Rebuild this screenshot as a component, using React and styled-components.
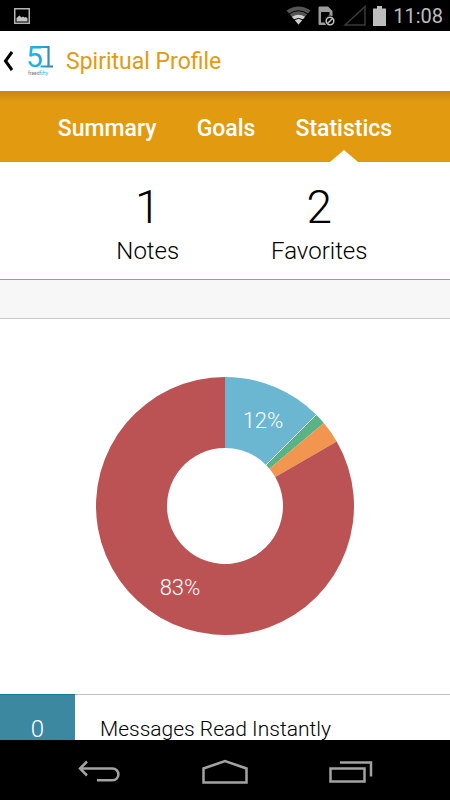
import React from 'react'
import styled, { createGlobalStyle } from 'styled-components'

const slices = [
    { name: 'blue', from: 0, to: 45, color: '#6bb6d0', label: '12%', x: 167, y: 51 },
    { name: 'green', from: 45, to: 50, color: '#59b385' },
    { name: 'orange', from: 50, to: 60, color: '#f2954f' },
    { name: 'red', from: 60, to: 360, color: '#bb5354', label: '83%', x: 84, y: 218 },
]

const center = 129
const outer = 129
const inner = 58

const point = (radius, angle) => {
    const rad = (angle * Math.PI) / 180
    return `${center + radius * Math.sin(rad)} ${center - radius * Math.cos(rad)}`
}

const slicePath = ({ from, to }) => {
    const large = to - from > 180 ? 1 : 0
    return `M${point(outer, from)} A${outer} ${outer} 0 ${large} 1 ${point(outer, to)} L${point(inner, to)} A${inner} ${inner} 0 ${large} 0 ${point(inner, from)} Z`
}

function StatusBar() {
    return (
        <StatusBarStyled>
            <svg width="16" height="16" viewBox="0 0 16 16">
                <rect x="0.75" y="0.75" width="14.5" height="14.5" fill="none" stroke="#b5b5b5" strokeWidth="1.5" />
                <path d="M2.5 13.5V10l3-2.5 2 2L9 8.500l1.500 1L12 9l1.500 1.500v3z" fill="#c4c4c4" />
            </svg>
            <div className="status-icons">
                <svg width="25" height="19" viewBox="0 0 25 19">
                    <path d="M12.500 18.500 0.500 4.500Q12.500-3.500 24.500 4.500z" fill="#555" />
                    <path d="M3 8Q12.500 1.500 22 8" fill="none" stroke="#000" strokeWidth="1" />
                    <path d="M12.500 18.500 6 10.800Q12.500 6.500 19 10.800z" fill="#d0d0d0" />
                    <path d="M8 13.800Q12.500 11 17 13.800" fill="none" stroke="#000" strokeWidth="1" />
                </svg>
                <svg width="18" height="20" viewBox="0 0 18 20">
                    <path d="M0.500 1.500a1 1 0 0 1 1-1H10L14.500 5V19H1.500a1 1 0 0 1-1-1z" fill="#9c9c9c" />
                    <path d="M3 6h8.500v3L7 12v4.500H3z" fill="#000" />
                    <circle cx="12" cy="15" r="5.500" fill="#000" />
                    <circle cx="12" cy="15" r="3.800" fill="none" stroke="#c4c4c4" strokeWidth="1.500" />
                    <path d="M9.500 17.500 14.500 12.500" stroke="#c4c4c4" strokeWidth="1.500" />
                </svg>
                <svg width="23" height="21" viewBox="0 0 23 21">
                    <path d="M2 20 22 1.500V20z" fill="none" stroke="#3a3a3a" strokeWidth="1.500" />
                </svg>
                <svg width="13" height="20" viewBox="0 0 13 20">
                    <path d="M0 2.500h4V0h5v2.500h4V20H0z" fill="#bdbdbd" />
                </svg>
                <time>11:08</time>
            </div>
        </StatusBarStyled>
    )
}

function Logo() {
    return (
        <svg width="28" height="44" viewBox="0 0 28 44" role="img" aria-label="51">
            <defs>
                <linearGradient id="logo" gradientUnits="userSpaceOnUse" x1="0" x2="27" y1="0" y2="0">
                    <stop offset="0" stopColor="#14bdf0" />
                    <stop offset="0.6" stopColor="#28a5d2" />
                    <stop offset="1" stopColor="#457f9c" />
                </linearGradient>
            </defs>
            <text x="0" y="28" fontSize="30" fontWeight="400" fill="url(#logo)">5</text>
            <path d="M15 8H22.500V27.500M14.500 27.500H27" fill="none" stroke="url(#logo)" strokeWidth="2.200" />
            <text x="2" y="36" fontSize="5" fill="#777">freed<tspan fill="#28b4e4">fifty</tspan></text>
        </svg>
    )
}

function App() {
    return (
        <Screen>
            <GlobalStyle />
            <StatusBar />
            <Header>
                <BackButton aria-label="Back">
                    <svg width="11" height="20" viewBox="0 0 11 20">
                        <path d="M10 1 3.500 10l6.500 9" fill="none" stroke="#000" strokeWidth="3" />
                    </svg>
                </BackButton>
                <Logo />
                <h1>Spiritual Profile</h1>
            </Header>
            <Tabs>
                <Tab>Summary</Tab>
                <Tab>Goals</Tab>
                <Tab $active aria-current="page">Statistics</Tab>
            </Tabs>
            <Content>
                <Stats>
                    <Stat>
                        <dd>1</dd>
                        <dt>Notes</dt>
                    </Stat>
                    <Stat>
                        <dd>2</dd>
                        <dt>Favorites</dt>
                    </Stat>
                </Stats>
                <Divider />
                <ChartBox>
                    <svg width="258" height="258" viewBox="0 0 258 258">
                        {slices.map(slice => (
                            <path key={slice.name} d={slicePath(slice)} fill={slice.color} />
                        ))}
                        <path d={`M${point(inner, 45)} L${point(outer, 45)}`} stroke="#e6f3f3" />
                        {slices.filter(slice => slice.label).map(slice => (
                            <text key={slice.name} x={slice.x} y={slice.y}>{slice.label}</text>
                        ))}
                    </svg>
                </ChartBox>
                <MessageRow>
                    <span className="count">0</span>
                    <span className="title">Messages Read Instantly</span>
                </MessageRow>
            </Content>
            <NavBar>
                <NavButton aria-label="Back">
                    <svg width="43" height="24" viewBox="0 0 43 24">
                        <path d="M2 9.500H34.500a5.900 5.900 0 0 1 0 11.800H19M9 2.500 2 9.500l7 7" />
                    </svg>
                </NavButton>
                <NavButton aria-label="Home">
                    <svg width="46" height="25" viewBox="0 0 46 25">
                        <path d="M1.500 23.500V9.500L23 2l21.500 7.500v14z" />
                    </svg>
                </NavButton>
                <NavButton aria-label="Recent apps">
                    <svg width="44" height="24" viewBox="0 0 44 24">
                        <path d="M1.500 9.500H35.500V22.500H1.500zM11 3.500H42V17.500" />
                    </svg>
                </NavButton>
            </NavBar>
        </Screen>
    )
}

const GlobalStyle = createGlobalStyle`
    *{
        box-sizing: border-box;
        margin: 0;
        padding: 0;
    }

    body{
        font-family: Roboto, 'Liberation Sans', sans-serif;
        background: #fff;
        color: #000;
    }

    svg{
        display: block;
        flex-shrink: 0;
    }

    button{
        border: none;
        background: none;
        font: inherit;
        color: inherit;
        cursor: pointer;
    }
`;

const Screen = styled.div`
    height: 100vh;
    display: flex;
    flex-direction: column;
    overflow: hidden;
`;

const StatusBarStyled = styled.div`
    display: flex;
    align-items: center;
    justify-content: space-between;
    flex-shrink: 0;
    height: 31px;
    padding: 0 7px 0 14px;
    background: #000;
    .status-icons{
        display: flex;
        align-items: center;
        gap: 7px;
    }
    time{
        color: #bdbdbd;
        font-size: 20px;
        line-height: 24px;
    }
`;

const Header = styled.header`
    display: flex;
    align-items: center;
    flex-shrink: 0;
    height: 60px;
    padding: 0 2px;
    background: #fff;
    h1{
        margin-left: 12px;
        padding-top: 2px;
        font-size: 23px;
        line-height: 28px;
        font-weight: 400;
        color: #e29a11;
    }
`;

const BackButton = styled.button`
    padding-right: 13px;
`;

const Tabs = styled.nav`
    display: flex;
    justify-content: center;
    gap: 40px;
    flex-shrink: 0;
    height: 71px;
    border-top: 1px solid #b98a3a;
    background: linear-gradient(#c98810, #e29a11 10px);
`;

const Tab = styled.button`
    position: relative;
    padding-top: 3px;
    font-size: 23px;
    line-height: 28px;
    font-weight: 500;
    color: #fff;
    &::after{
        content: '';
        display: ${({ $active }) => ($active ? 'block' : 'none')};
        position: absolute;
        left: 50%;
        bottom: 0;
        margin-left: -14px;
        border: 14px solid transparent;
        border-top: none;
        border-bottom: 12px solid #fff;
    }
`;

const Content = styled.main`
    flex: 1;
    min-height: 0;
    overflow: hidden;
`;

const Stats = styled.dl`
    display: grid;
    grid-template-columns: 1fr 1fr;
    padding: 17px 45px 11px 62px;
    border-bottom: 1px solid #d6921c;
`;

const Stat = styled.div`
    display: flex;
    flex-direction: column;
    align-items: center;
    font-weight: 300;
    dd{
        font-size: 46px;
        line-height: 56px;
    }
    dt{
        font-size: 24px;
        line-height: 33px;
    }
`;

const Divider = styled.div`
    height: 39px;
    background: #f7f7f7;
    border-bottom: 1px solid #c8c8c8;
`;

const ChartBox = styled.div`
    display: flex;
    justify-content: center;
    padding: 58px 0 59px;
    text{
        fill: #fff;
        font-size: 22px;
        font-weight: 300;
        text-anchor: middle;
    }
`;

const MessageRow = styled.div`
    display: flex;
    font-weight: 300;
    line-height: 68px;
    .count{
        width: 75px;
        background: #3c88a0;
        border-top: 1px solid #0f7f99;
        color: #fff;
        font-size: 24px;
        text-align: center;
    }
    .title{
        flex: 1;
        padding-left: 25px;
        border-top: 1px solid #c0c0c0;
        font-size: 21px;
    }
`;

const NavBar = styled.nav`
    display: flex;
    justify-content: center;
    gap: 81px;
    flex-shrink: 0;
    height: 60px;
    background: #000;
`;

const NavButton = styled.button`
    padding-top: 2px;
    svg{
        fill: none;
        stroke: #a3a3a3;
        stroke-width: 2.5;
    }
`;

export default App
